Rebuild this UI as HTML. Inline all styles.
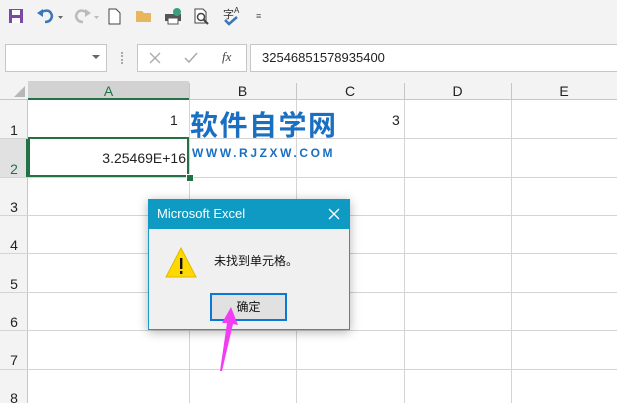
<html><head><style>
body{margin:0;width:617px;height:403px;overflow:hidden;background:#fff;font-family:"Liberation Sans","Noto Sans CJK SC",sans-serif;position:relative}
.a{position:absolute}
.tb{left:0;top:0;width:617px;height:81px;background:#f3f3f3}
.box{background:#fff;border:1px solid #c6c6c6}
.vl{position:absolute;top:100px;height:303px;width:1px;background:#d4d4d4}
.hl{position:absolute;left:0;width:617px;height:1px;background:#d4d4d4}
.rn{position:absolute;left:0;width:28px;text-align:center;font-size:14px;color:#222}
.ch{position:absolute;top:83px;height:17px;font-size:14px;text-align:center;color:#222;line-height:17px}
</style></head><body>
<div class="a tb"></div>
<svg class="a" style="left:8px;top:8px" width="16" height="16"><rect x="1" y="1" width="14" height="14" fill="#7b4ba3"/><rect x="4" y="2" width="8" height="5" fill="#fff"/><rect x="4" y="10" width="8" height="5" fill="#fff"/></svg>
<svg class="a" style="left:36px;top:7px" width="30" height="18"><path d="M4 6 Q14 0 16 9 Q15 15 9 15" stroke="#3a76b8" stroke-width="2.5" fill="none"/><path d="M1 6 L7 2 L7 10Z" fill="#3a76b8"/><path d="M22 9 l5 0 l-2.5 3z" fill="#666"/></svg>
<svg class="a" style="left:72px;top:7px" width="30" height="18"><path d="M16 6 Q6 0 4 9 Q5 15 11 15" stroke="#bbb" stroke-width="2.5" fill="none"/><path d="M19 6 L13 2 L13 10Z" fill="#bbb"/><path d="M22 9 l5 0 l-2.5 3z" fill="#bbb"/></svg>
<svg class="a" style="left:108px;top:8px" width="14" height="17"><path d="M1 1 H8 L12 5 V16 H1Z" fill="#fff" stroke="#444"/></svg>
<svg class="a" style="left:135px;top:9px" width="18" height="14"><path d="M1 2 H7 L9 4 H16 V13 H1Z" fill="#e8b65c"/></svg>
<svg class="a" style="left:164px;top:7px" width="18" height="18"><rect x="1" y="7" width="16" height="7" fill="#555"/><rect x="4" y="11" width="10" height="6" fill="#fff" stroke="#555"/><circle cx="13" cy="5" r="4" fill="#3a9f7a"/></svg>
<svg class="a" style="left:194px;top:8px" width="18" height="18"><path d="M1 1 H9 L12 4 V15 H1Z" fill="#fff" stroke="#444"/><circle cx="7" cy="9" r="3.5" fill="none" stroke="#444" stroke-width="1.5"/><path d="M9.5 11.5 L14 16" stroke="#444" stroke-width="2"/></svg>
<div class="a" style="left:223px;top:6px;font-size:11px;color:#333">字<span style="font-size:8px;vertical-align:top">A</span></div>
<svg class="a" style="left:224px;top:16px" width="14" height="10"><path d="M1 4 L5 8 L13 1" stroke="#3a76b8" stroke-width="2.5" fill="none"/></svg>
<div class="a" style="left:256px;top:11px;font-size:9px;color:#555">&#8801;</div>
<div class="a box" style="left:5px;top:44px;width:100px;height:26px"></div>
<svg class="a" style="left:92px;top:55px" width="9" height="5"><path d="M0 0H8L4 4Z" fill="#666"/></svg>
<div class="a" style="left:121px;top:52px;width:2px;height:12px;border-left:2px dotted #aaa"></div>
<div class="a box" style="left:137px;top:44px;width:108px;height:26px"></div>
<svg class="a" style="left:149px;top:52px" width="12" height="12"><path d="M1 1L11 11M11 1L1 11" stroke="#aaa" stroke-width="1.3"/></svg>
<svg class="a" style="left:184px;top:52px" width="14" height="12"><path d="M1 6L5 10L13 1" stroke="#aaa" stroke-width="1.5" fill="none"/></svg>
<div class="a" style="left:222px;top:49px;font-size:13px;font-style:italic;font-family:'Liberation Serif',serif;color:#444">fx</div>
<div class="a box" style="left:250px;top:44px;width:367px;height:26px"></div>
<div class="a" style="left:262px;top:50px;font-size:13px;color:#222">32546851578935400</div>
<div class="a" style="left:0;top:81px;width:617px;height:19px;background:#f3f3f3;border-bottom:1px solid #c6c6c6;box-sizing:border-box"></div>
<div class="a" style="left:0;top:100px;width:28px;height:303px;background:#f3f3f3;border-right:1px solid #c6c6c6;box-sizing:border-box"></div>
<div class="a" style="left:0;top:138px;width:28px;height:39px;background:#e1e1e1;border-right:2px solid #217346;box-sizing:border-box"></div>
<svg class="a" style="left:14px;top:86px" width="12" height="12"><path d="M11 0V11H0Z" fill="#b7b7b7"/></svg>
<div class="a" style="left:28px;top:81px;width:161px;height:19px;background:#d2d2d2;border-bottom:2px solid #217346;box-sizing:border-box"></div>
<div class="ch" style="left:28px;width:161px;color:#217346">A</div>
<div class="ch" style="left:189px;width:107px">B</div>
<div class="ch" style="left:296px;width:108px">C</div>
<div class="ch" style="left:404px;width:107px">D</div>
<div class="ch" style="left:511px;width:106px">E</div>
<div class="a" style="left:189px;top:83px;width:1px;height:17px;background:#c6c6c6"></div>
<div class="a" style="left:296px;top:83px;width:1px;height:17px;background:#c6c6c6"></div>
<div class="a" style="left:404px;top:83px;width:1px;height:17px;background:#c6c6c6"></div>
<div class="a" style="left:511px;top:83px;width:1px;height:17px;background:#c6c6c6"></div>
<div class="vl" style="left:189px"></div><div class="vl" style="left:296px"></div><div class="vl" style="left:404px"></div><div class="vl" style="left:511px"></div>
<div class="hl" style="top:138px"></div><div class="hl" style="top:177px"></div><div class="hl" style="top:215px"></div><div class="hl" style="top:253px"></div><div class="hl" style="top:292px"></div><div class="hl" style="top:330px"></div><div class="hl" style="top:369px"></div>
<div class="rn" style="top:122px">1</div><div class="rn" style="top:161px;color:#217346">2</div><div class="rn" style="top:199px">3</div><div class="rn" style="top:237px">4</div><div class="rn" style="top:276px">5</div><div class="rn" style="top:314px">6</div><div class="rn" style="top:352px">7</div><div class="rn" style="top:390px">8</div>
<div class="a" style="left:170px;top:112px;font-size:14px;color:#222">1</div>
<div class="a" style="left:392px;top:112px;font-size:14px;color:#222">3</div>
<div class="a" style="left:28px;top:137px;width:161px;height:40px;border:2px solid #217346;box-sizing:border-box"></div>
<div class="a" style="left:186px;top:174px;width:6px;height:6px;background:#217346;border:1px solid #fff"></div>
<div class="a" style="left:30px;top:150px;width:156px;text-align:right;font-size:14px;color:#222">3.25469E+16</div>
<div class="a" style="left:190px;top:110px;font-size:28px;font-weight:bold;color:#1a6fc0;letter-spacing:1.5px;line-height:32px">软件自学网</div>
<div class="a" style="left:192px;top:146px;font-size:12px;font-weight:bold;color:#1a6fc0;letter-spacing:2.6px">WWW.RJZXW.COM</div>
<div class="a" style="left:148px;top:199px;width:202px;height:131px;background:#f0f0f0;border:1px solid #1a9ac5;box-sizing:border-box;box-shadow:0 2px 10px rgba(0,0,0,.3)"></div>
<div class="a" style="left:148px;top:199px;width:202px;height:30px;background:#0f9ac3"></div>
<div class="a" style="left:157px;top:206px;font-size:13px;color:#fff">Microsoft Excel</div>
<svg class="a" style="left:328px;top:208px" width="12" height="12"><path d="M1 1L11 11M11 1L1 11" stroke="#fff" stroke-width="1.3"/></svg>
<svg class="a" style="left:164px;top:246px" width="34" height="34"><path d="M17 2 L32 31 H2Z" fill="#ffd800" stroke="#e0b800"/><rect x="16" y="12" width="2.4" height="11" fill="#111"/><rect x="16" y="25" width="2.4" height="3" fill="#111"/></svg>
<div class="a" style="left:214px;top:252px;font-size:12px;color:#111">未找到单元格。</div>
<div class="a" style="left:210px;top:293px;width:77px;height:28px;background:#e1e1e1;border:2px solid #0a78d4;box-sizing:border-box;text-align:center;font-size:12px;line-height:24px;color:#111">确定</div>
<svg class="a" style="left:210px;top:305px" width="30" height="70"><path d="M21 2 L28 20 L23 19 L12 66 L10 66 L17 18 L12 18Z" fill="#f23ef2"/></svg>
</body></html>
